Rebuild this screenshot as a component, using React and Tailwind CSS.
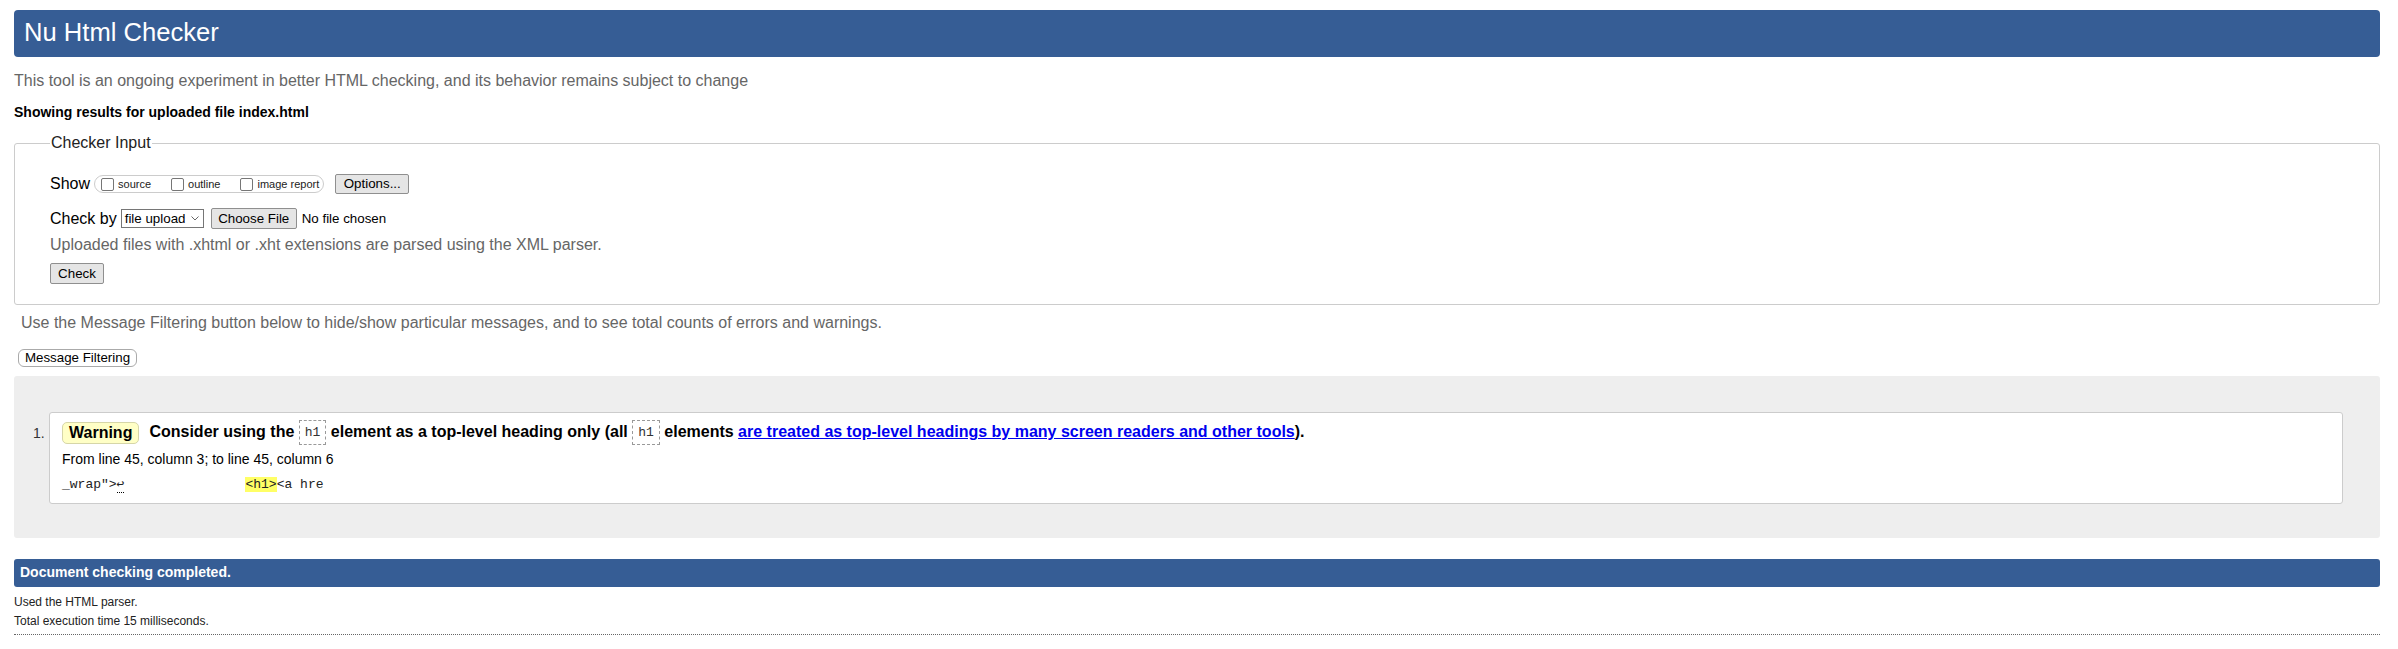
import React from 'react';

const btn =
    'inline-flex items-center justify-center border border-[#8f8f8f] rounded-[2px] bg-[#e5e5e5] text-[13.33px] leading-none text-black';

function Checkbox({ label, className = '' }) {
    return (
        <span className={`flex items-center ${className}`}>
            <span className="w-[13px] h-[13px] border border-[#767676] rounded-[2px] bg-white"></span>
            <span className="ml-[4px] text-[11px] leading-none text-[#222]">{label}</span>
        </span>
    );
}

function Code({ children }) {
    return (
        <code className="inline-block align-middle border border-dashed border-[#999] px-[5px] py-[3px] font-['Liberation_Mono',monospace] text-[13px] leading-[17px] font-normal text-[#333] bg-white">
            {children}
        </code>
    );
}

export default function App() {
    return (
        <div className="min-h-[649px] bg-white font-['Liberation_Sans',Arial,sans-serif] text-black pt-[10px] pl-[14px] pr-[18px]">
            {/* Title bar */}
            <h1 className="h-[47px] flex items-center rounded-[4px] bg-[#365d95] pl-[10px] pb-[3px] text-[25.6px] font-normal text-white">
                Nu Html Checker
            </h1>

            <p className="mt-[15px] text-[16px] leading-[18px] text-[#666]">
                This tool is an ongoing experiment in better HTML checking, and its behavior remains subject to change
            </p>
            <p className="mt-[14px] text-[14px] leading-[16px] font-bold">Showing results for uploaded file index.html</p>

            {/* Checker input */}
            <fieldset className="mt-[14px] border border-[#ccc] rounded-[3px] pl-[35px] pb-[19px]">
                <legend className="px-px text-[16px] leading-[18px] text-[#222]">Checker Input</legend>

                <div className="mt-[22px] h-[20px] flex items-center">
                    <span className="text-[16px]">Show</span>
                    <span className="ml-[4px] h-[18px] flex items-center rounded-full border border-[#ccc] pl-[6px] pr-[4px]">
                        <Checkbox label="source" />
                        <Checkbox label="outline" className="ml-[20px]" />
                        <Checkbox label="image report" className="ml-[20px]" />
                    </span>
                    <button className={`${btn} ml-[11px] w-[74px] h-[20px]`}>Options...</button>
                </div>

                <div className="mt-[14px] h-[21px] flex items-center">
                    <span className="text-[16px]">Check by</span>
                    <span className="ml-[4px] w-[83px] h-[19px] flex items-center justify-between border border-[#767676] bg-white pl-[3px] pr-[4px] text-[13.33px]">
                        file upload
                        <svg width="8" height="5" viewBox="0 0 8 5" fill="none">
                            <path d="M0.5 0.5 L4 4 L7.5 0.5" stroke="#666" strokeWidth="1" />
                        </svg>
                    </span>
                    <button className={`${btn} ml-[7px] w-[86px] h-[21px]`}>Choose File</button>
                    <span className="ml-[5px] text-[13.33px]">No file chosen</span>
                </div>

                <p className="mt-[7px] text-[16px] leading-[18px] text-[#666]">
                    Uploaded files with .xhtml or .xht extensions are parsed using the XML parser.
                </p>

                <button className={`${btn} mt-[9px] w-[54px] h-[21px]`}>Check</button>
            </fieldset>

            <p className="mt-[9px] ml-[7px] text-[16px] leading-[18px] text-[#666]">
                Use the Message Filtering button below to hide/show particular messages, and to see total counts of errors and warnings.
            </p>
            <div className="mt-[17px] ml-[4px]">
                <button className="w-[119px] h-[18px] flex items-center justify-center rounded-[6px] border border-[#aaa] bg-white text-[13.33px] leading-none">
                    Message Filtering
                </button>
            </div>

            {/* Results */}
            <div className="mt-[9px] bg-[#eee] rounded-[3px] pt-[36px] pb-[34px] pl-[19px] pr-[37px] flex">
                <span className="w-[16px] pt-[13px] text-[14px] leading-[16px] text-[#333]">1.</span>
                <div className="flex-1 h-[92px] border border-[#ccc] rounded-[3px] bg-white pl-[12px] pt-[9px]">
                    <div className="h-[22px] flex items-center">
                        <span className="h-[22px] flex items-center px-[6px] border border-[#d6d6a8] bg-[#ffffc6] rounded-[5px] text-[16px] font-bold">
                            Warning
                        </span>
                        <span className="ml-[10px] text-[16px] font-bold whitespace-nowrap">
                            Consider using the <Code>h1</Code> element as a top-level heading only (all <Code>h1</Code>{' '}
                            elements{' '}
                            <a href="#" className="text-[#0000ee] underline">
                                are treated as top-level headings by many screen readers and other tools
                            </a>
                            ).
                        </span>
                    </div>
                    <p className="mt-[7px] text-[14px] leading-[16px]">From line 45, column 3; to line 45, column 6</p>
                    <p className="mt-[10px] font-['Liberation_Mono',monospace] text-[13px] leading-[16px] whitespace-pre text-[#222]">
                        {'_wrap">'}
                        <span className="border-b border-dotted border-black">↩</span>
                        {'               '}
                        <mark className="ml-[4px] bg-[#ffff66] text-[#222]">{'<h1>'}</mark>
                        {'<a hre'}
                    </p>
                </div>
            </div>

            {/* Footer */}
            <div className="mt-[21px] h-[28px] flex items-center bg-[#365d95] rounded-[3px] pl-[6px] text-[14px] font-bold text-white">
                Document checking completed.
            </div>
            <p className="mt-[8px] text-[12px] leading-[14px] text-[#222]">Used the HTML parser.</p>
            <p className="mt-[5px] text-[12px] leading-[14px] text-[#222]">Total execution time 15 milliseconds.</p>
            <div className="mt-[6px] border-t border-dotted border-[#666]"></div>
        </div>
    );
}
